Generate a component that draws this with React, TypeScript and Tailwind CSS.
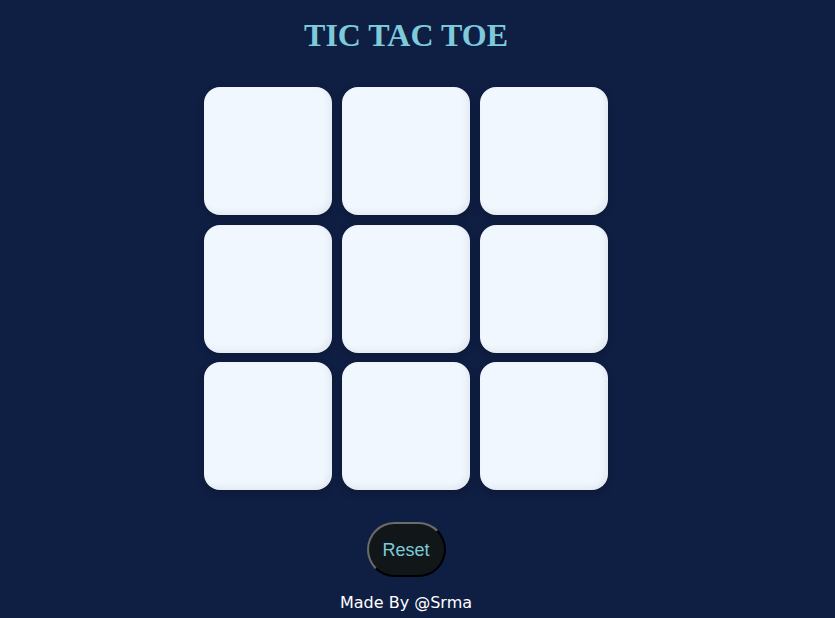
import React from "react";

export default function App() {
  const cells = Array.from({ length: 9 });
  return (
    <div className="min-h-[618px] w-full bg-[#0f1e43]">
      <div className="w-[812px] flex flex-col items-center">
        <h1 className="mt-[17px] text-[32px] leading-[37px] font-bold text-[#7dcadb] [font-family:'Liberation_Serif',serif]">
          TIC TAC TOE
        </h1>
        <div className="mt-[33px] grid grid-cols-[128px_128px_128px] gap-x-[10px] gap-y-[9.5px]">
          {cells.map((_, i) => (
            <div
              key={i}
              className="h-[128px] w-[128px] rounded-[16px] bg-[#f0f7ff] shadow-[inset_-3px_-3px_6px_rgba(0,0,0,0.06),0_3px_8px_rgba(0,0,0,0.2)]"
            />
          ))}
        </div>
        <button className="mt-[32px] h-[55px] w-[79px] rounded-full bg-[#111619] border-2 border-t-[#6b6b6b] border-l-[#6b6b6b] border-b-black border-r-black pt-[2px] text-[18px] text-[#7dcadb] [font-family:'Liberation_Sans',Arial,sans-serif]">
          Reset
        </button>
        <div className="mt-[16px] text-[16px] leading-[19px] text-white [font-family:'DejaVu_Sans',sans-serif]">
          Made By @Srma
        </div>
      </div>
    </div>
  );
}
